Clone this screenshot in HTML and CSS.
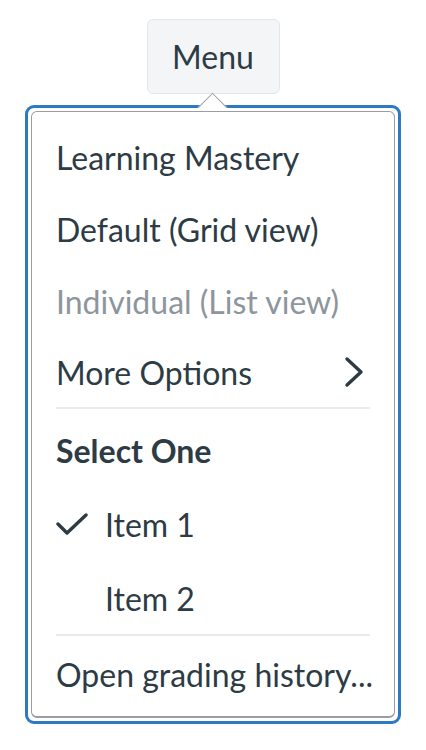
FILE: index.html
```html
<!DOCTYPE html>
<html lang="en">
<head>
<meta charset="utf-8">
<title>Menu</title>
<link rel="stylesheet" href="styles.css">
</head>
<body>
<div class="page">
  <button class="trigger" type="button">Menu</button>
  <div class="focus-ring">
    <span class="caret"></span>
    <div class="menu" role="menu">
      <div class="item" role="menuitem">Learning Mastery</div>
      <div class="item" role="menuitem">Default (Grid view)</div>
      <div class="item disabled" role="menuitem">Individual (List view)</div>
      <div class="item submenu" role="menuitem">
        <span>More Options</span>
        <svg class="chevron" width="20" height="32" viewBox="0 0 20 32"><path d="M3 3 L17 16 L3 29" fill="none" stroke="#2d3b45" stroke-width="3.4" stroke-linecap="round" stroke-linejoin="round"/></svg>
      </div>
      <div class="divider"></div>
      <div class="group-label">Select One</div>
      <div class="item radio first">
        <span class="check"><svg width="32" height="24" viewBox="0 0 32 24"><path d="M2 12 L11 21 L30 3" fill="none" stroke="#2d3b45" stroke-width="3.4" stroke-linecap="round" stroke-linejoin="round"/></svg></span>
        <span>Item 1</span>
      </div>
      <div class="item radio">
        <span class="check"></span>
        <span>Item 2</span>
      </div>
      <div class="divider"></div>
      <div class="item last">Open grading history...</div>
    </div>
  </div>
</div>
</body>
</html>
```
FILE: styles.css
```css
html, body {
  margin: 0;
  padding: 0;
  background: #ffffff;
}
body {
  font-family: Lato, "Noto Sans", sans-serif;
  color: #2d3b45;
}
.page {
  display: flex;
  flex-direction: column;
  align-items: center;
  padding-top: 19px;
}
.trigger {
  font-family: Lato, "Noto Sans", sans-serif;
  font-size: 32px;
  color: #2d3b45;
  background: #f4f5f6;
  border: 1px solid #e5e6e7;
  border-radius: 6px;
  width: 133px;
  height: 75px;
  padding: 0;
  line-height: 1;
}
.focus-ring {
  position: relative;
  margin-top: 11px;
  width: 376px;
  box-sizing: border-box;
  border: 3px solid #2d7ac0;
  border-radius: 9px;
  padding: 3px;
}
.caret {
  position: absolute;
  left: 50%;
  top: -11px;
  width: 21px;
  height: 21px;
  margin-left: -11px;
  background: #ffffff;
  border-left: 1.5px solid #9a9da1;
  border-top: 1.5px solid #9a9da1;
  transform: rotate(45deg);
  transform-origin: center;
  box-sizing: border-box;
}
.menu {
  position: relative;
  border: 1.5px solid #9a9da1;
  border-bottom-width: 2.5px;
  border-radius: 6px;
  padding: 9px 0 6px;
  background: #ffffff;
}
.item {
  display: flex;
  align-items: center;
  height: 72px;
  padding: 0 24px;
  font-size: 32px;
  white-space: nowrap;
}
.item.disabled {
  color: #8d969c;
}
.submenu {
  justify-content: space-between;
  height: 70px;
}
.chevron {
  margin-right: 6px;
}
.divider {
  height: 2px;
  background: #e8eaec;
  margin: 0 24px;
}
.group-label {
  display: flex;
  align-items: center;
  height: 72px;
  margin-top: 5px;
  padding: 0 24px;
  font-size: 32px;
  font-weight: 700;
}
.radio.first {
  height: 76px;
}
.check {
  display: inline-flex;
  align-items: center;
  width: 49px;
}
.item.last {
  margin-top: 2px;
}
```
